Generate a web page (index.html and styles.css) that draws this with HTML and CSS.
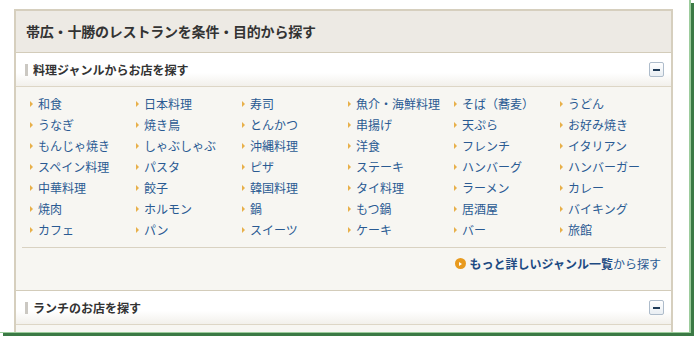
FILE: index.html
```html
<!DOCTYPE html>
<html lang="ja">
<head>
<meta charset="utf-8">
<link rel="stylesheet" href="styles.css">
</head>
<body>
<div class="shot">
  <div class="box">
    <div class="box-head">帯広・十勝のレストランを条件・目的から探す</div>

    <div class="sec-head">
      <span class="sec-title">料理ジャンルからお店を探す</span>
      <span class="toggle"></span>
    </div>
    <div class="sec-body">
      <ul class="genres">
        <li><a>和食</a></li>
        <li><a>日本料理</a></li>
        <li><a>寿司</a></li>
        <li><a>魚介・海鮮料理</a></li>
        <li><a>そば（蕎麦）</a></li>
        <li><a>うどん</a></li>
        <li><a>うなぎ</a></li>
        <li><a>焼き鳥</a></li>
        <li><a>とんかつ</a></li>
        <li><a>串揚げ</a></li>
        <li><a>天ぷら</a></li>
        <li><a>お好み焼き</a></li>
        <li><a>もんじゃ焼き</a></li>
        <li><a>しゃぶしゃぶ</a></li>
        <li><a>沖縄料理</a></li>
        <li><a>洋食</a></li>
        <li><a>フレンチ</a></li>
        <li><a>イタリアン</a></li>
        <li><a>スペイン料理</a></li>
        <li><a>パスタ</a></li>
        <li><a>ピザ</a></li>
        <li><a>ステーキ</a></li>
        <li><a>ハンバーグ</a></li>
        <li><a>ハンバーガー</a></li>
        <li><a>中華料理</a></li>
        <li><a>餃子</a></li>
        <li><a>韓国料理</a></li>
        <li><a>タイ料理</a></li>
        <li><a>ラーメン</a></li>
        <li><a>カレー</a></li>
        <li><a>焼肉</a></li>
        <li><a>ホルモン</a></li>
        <li><a>鍋</a></li>
        <li><a>もつ鍋</a></li>
        <li><a>居酒屋</a></li>
        <li><a>バイキング</a></li>
        <li><a>カフェ</a></li>
        <li><a>パン</a></li>
        <li><a>スイーツ</a></li>
        <li><a>ケーキ</a></li>
        <li><a>バー</a></li>
        <li><a>旅館</a></li>
      </ul>
      <div class="more">
        <a class="more-link"><span class="more-icon"></span><b>もっと詳しいジャンル一覧</b>から探す</a>
      </div>
    </div>

    <div class="sec-head">
      <span class="sec-title">ランチのお店を探す</span>
      <span class="toggle"></span>
    </div>
    <div class="sec-body sec-body-cut"></div>
  </div>
</div>
</body>
</html>
```

FILE: styles.css
```css
html, body {
  margin: 0;
  padding: 0;
  background: #ffffff;
}
body {
  font-family: "Noto Sans CJK JP", "Noto Sans", sans-serif;
  width: 694px;
  height: 338px;
  overflow: hidden;
}
.shot {
  width: 675px;
  height: 323px;
  padding: 9px 0 0 14px;
  background: #ffffff;
  overflow: hidden;
  border-right: 2px solid #9ccc9c;
  border-bottom: 1px solid #9ccc9c;
  box-shadow: 3px 3px 0 #3b7a45;
}
.box {
  width: 655px;
  border: 2px solid #d6cfbe;
  border-bottom: none;
  background: #f7f6f2;
}
.box-head {
  height: 41px;
  background: #edeae4;
  border-bottom: 1px solid #d3ccba;
  padding-left: 10px;
  font-size: 14px;
  font-weight: bold;
  color: #333333;
  line-height: 41px;
  letter-spacing: -0.2px;
}
.sec-head {
  height: 33px;
  display: flex;
  align-items: center;
  justify-content: space-between;
  background: linear-gradient(#ffffff 0%, #ffffff 60%, #f2f0eb 100%);
  border-bottom: 1px solid #ddd6c6;
  padding: 0 7px 0 9px;
}
.sec-title {
  display: flex;
  align-items: center;
  font-size: 12px;
  font-weight: bold;
  color: #333333;
  line-height: 16px;
}
.sec-title::before {
  content: "";
  width: 3px;
  height: 12px;
  background: #cbc8c2;
  margin-right: 5px;
}
.toggle {
  width: 13px;
  height: 13px;
  border: 1px solid #aebccb;
  border-radius: 2px;
  background: linear-gradient(#ffffff, #e9eef3);
  display: flex;
  align-items: center;
  justify-content: center;
}
.toggle::before {
  content: "";
  width: 7px;
  height: 2px;
  background: #1f3b58;
}
.sec-body {
  border-bottom: 1px solid #d3ccba;
  padding: 6px 0 16px 0;
}
.genres {
  list-style: none;
  margin: 0;
  padding: 0 0 0 14px;
  display: grid;
  grid-template-columns: repeat(6, 106px);
  grid-auto-rows: 21px;
}
.genres li {
  display: flex;
  align-items: center;
  font-size: 12px;
  line-height: 21px;
  color: #2a5a92;
  white-space: nowrap;
}
.genres li::before {
  content: "";
  width: 0;
  height: 0;
  border-top: 3px solid transparent;
  border-bottom: 3px solid transparent;
  border-left: 3px solid #e8b04a;
  margin-right: 5px;
}
.more {
  margin: 7px 5px 0 6px;
  border-top: 1px solid #d9d2c2;
  padding-top: 5px;
  display: flex;
  justify-content: flex-end;
}
.more-link {
  display: flex;
  align-items: center;
  font-size: 12px;
  line-height: 21px;
  color: #2a5a92;
  margin-right: 5px;
}
.more-link b {
  color: #1d4a82;
}
.more-icon {
  width: 11px;
  height: 11px;
  border-radius: 50%;
  background: #e89a1e;
  margin-right: 4px;
  display: flex;
  align-items: center;
  justify-content: center;
}
.more-icon::before {
  content: "";
  width: 0;
  height: 0;
  border-top: 2.5px solid transparent;
  border-bottom: 2.5px solid transparent;
  border-left: 3px solid #ffffff;
  margin-left: 1px;
}
.sec-body-cut {
  height: 20px;
  padding: 0;
  border-bottom: none;
}
```
